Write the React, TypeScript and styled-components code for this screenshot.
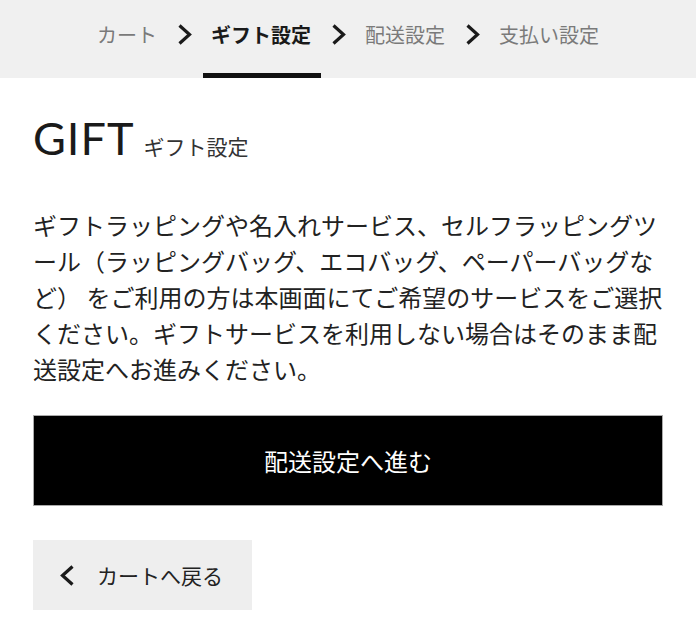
import styled, { createGlobalStyle } from "styled-components";

const JP = `"Noto Sans CJK JP", "Noto Sans", sans-serif`;

const steps = [
  { label: "カート", active: false },
  { label: "ギフト設定", active: true },
  { label: "配送設定", active: false },
  { label: "支払い設定", active: false },
];

const Chevron = ({ dir = "right" }: { dir?: "left" | "right" }) => (
  <svg width={15} height={23} viewBox="0 0 15 23" fill="none">
    <path
      d={dir === "right" ? "M2.5 2.5 L12.5 11.5 L2.5 20.5" : "M12.5 2.5 L2.5 11.5 L12.5 20.5"}
      stroke="#1a1a1a"
      strokeWidth="3.2"
      strokeLinecap="butt"
      strokeLinejoin="miter"
    />
  </svg>
);

const App = () => {
  return (
    <>
      <GlobalStyle />
      <StepBar>
        {steps.map((s, i) => (
          <StepGroup key={s.label}>
            {i > 0 && (
              <Sep>
                <Chevron />
              </Sep>
            )}
            <Step active={s.active}>{s.label}</Step>
          </StepGroup>
        ))}
      </StepBar>
      <Main>
        <Title>
          GIFT<Sub>ギフト設定</Sub>
        </Title>
        <Lead>
          ギフトラッピングや名入れサービス、セルフラッピングツール（ラッピングバッグ、エコバッグ、ペーパーバッグなど）
          をご利用の方は本画面にてご希望のサービスをご選択ください。ギフトサービスを利用しない場合はそのまま配送設定へお進みください。
        </Lead>
        <PrimaryButton>配送設定へ進む</PrimaryButton>
        <BackButton>
          <Chevron dir="left" />
          <span>カートへ戻る</span>
        </BackButton>
      </Main>
    </>
  );
};

const GlobalStyle = createGlobalStyle`
  body {
    margin: 0;
    background: #fff;
    font-family: ${JP};
    color: #222;
  }
`;

const StepBar = styled.nav`
  display: flex;
  justify-content: center;
  height: 78px;
  background: #f0f0f0;
`;

const StepGroup = styled.div`
  display: flex;
`;

const Sep = styled.div`
  display: flex;
  align-items: center;
  padding: 0 19px 10px 20px;
`;

const Step = styled.div<{ active?: boolean }>`
  display: flex;
  align-items: center;
  padding-bottom: ${({ active }) => (active ? "5px" : "10px")};
  font-size: 20px;
  font-weight: ${({ active }) => (active ? 700 : 400)};
  color: ${({ active }) => (active ? "#1a1a1a" : "#7a7a7a")};
  ${({ active }) =>
    active &&
    `
    margin: 0 -10px 0 -8px;
    padding-left: 8px;
    padding-right: 10px;
    border-bottom: 5px solid #111;
  `}
`;

const Main = styled.main`
  padding: 0 33px 21px;
`;

const Title = styled.h1`
  display: flex;
  align-items: baseline;
  gap: 9px;
  margin: 30px 0 0;
  font-family: Lato, "Noto Sans", sans-serif;
  font-weight: 400;
  font-size: 45px;
  letter-spacing: 1px;
  line-height: 60px;
  color: #1a1a1a;
`;

const Sub = styled.span`
  font-family: ${JP};
  font-size: 21px;
  font-weight: 400;
  letter-spacing: 0;
  color: #333;
`;

const Lead = styled.p`
  margin: 31px 0 28px;
  font-size: 24px;
  line-height: 36px;
  color: #222;
`;

const PrimaryButton = styled.button`
  display: block;
  width: 100%;
  height: 91px;
  border: 1px solid #aaa;
  background: #000;
  color: #fff;
  font-family: ${JP};
  font-size: 24px;
  cursor: pointer;
`;

const BackButton = styled.button`
  display: flex;
  align-items: center;
  gap: 22px;
  height: 70px;
  margin-top: 34px;
  padding: 0 29px 0 27px;
  border: none;
  background: #eee;
  color: #222;
  font-family: ${JP};
  font-size: 21px;
  cursor: pointer;
`;

export default App;
